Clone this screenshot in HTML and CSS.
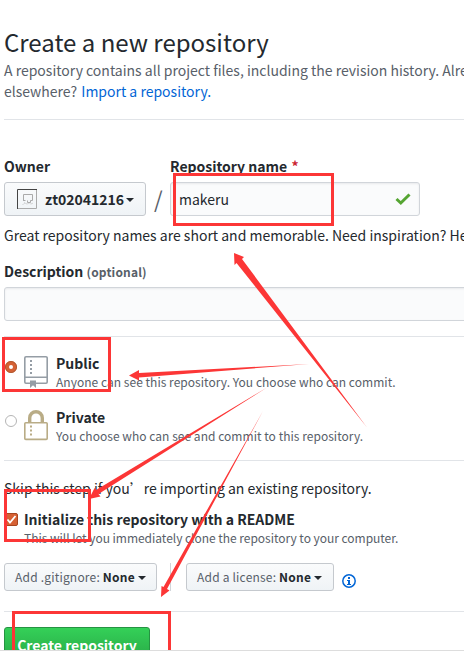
FILE: index.html
```html
<!DOCTYPE html>
<html lang="en">
<head>
<meta charset="utf-8">
<title>Create a new repository</title>
<link rel="stylesheet" href="styles.css">
</head>
<body>
<main class="page">
  <header class="intro">
    <h1>Create a new repository</h1>
    <p class="muted">A repository contains all project files, including the revision history. Already</p>
    <p class="muted">elsewhere? <a href="#">Import a repository.</a></p>
  </header>
  <form>
    <section class="names">
      <div class="fields">
        <div class="owner">
          <label class="label">Owner</label>
          <button type="button" class="btn owner-btn">
            <svg class="avatar" width="20" height="20" viewBox="0 0 20 20"><path d="M.5 19.500h19V.5" fill="none" stroke="#aaa"/><path d="M.5 20V.5h19.500" fill="none" stroke="#444"/><path d="M6.500 12V5.500h9V11.500h-2v2h-3v-2M6.500 11.500h2" fill="none" stroke="#aaa"/><path d="M6 15.500l2-2 2 2 2-2 2 2 2-2" fill="none" stroke="#aaa" stroke-dasharray="1 1"/></svg>
            <b>zt02041216</b><i class="caret"></i>
          </button>
        </div>
        <span class="slash">/</span>
        <div class="repo">
          <label class="label">Repository name <span class="star">*</span></label>
          <div class="input repo-input"><span>makeru</span>
            <svg width="16" height="14" viewBox="0 0 16 14"><path d="M1.500 7L5.800 11 14.500 2.500" fill="none" stroke="#55a532" stroke-width="3"/></svg>
          </div>
        </div>
      </div>
      <p class="hint">Great repository names are short and memorable. Need inspiration? Here</p>
    </section>
    <section class="description">
      <label class="label">Description <small>(optional)</small></label>
      <div class="input desc-input"></div>
    </section>
    <section class="visibility">
      <div class="choice">
        <i class="radio on"></i>
        <svg class="kind" width="24" height="32" viewBox="0 0 24 32"><path d="M6 27.200H2a1.200 1.200 0 0 1-1.200-1.200V2A1.200 1.200 0 0 1 2 .8h20A1.200 1.200 0 0 1 23.200 2v24a1.200 1.200 0 0 1-1.200 1.200H12M1 21.200h22" fill="none" stroke="#959da5" stroke-width="1.600"/><path d="M6 24.500h6V32l-3-2.700L6 32z" fill="#959da5"/><path d="M6 4h2v2H6zm0 4h2v2H6zm0 4h2v2H6zm0 4h2v2H6z" fill="#959da5"/></svg>
        <div><b>Public</b><p class="note">Anyone can see this repository. You choose who can commit.</p></div>
      </div>
      <div class="choice">
        <i class="radio"></i>
        <svg class="kind" width="24" height="32" viewBox="0 0 24 32"><path d="M5.700 13V8a6.300 6.300 0 0 1 12.600 0v5" fill="none" stroke="#b9ac86" stroke-width="3.400"/><rect x=".8" y="12.800" width="22.400" height="16.600" rx="1" fill="none" stroke="#b9ac86" stroke-width="1.600"/><path d="M6 15.500h2v2H6zm0 4h2v2H6zm0 4h2v2H6z" fill="#b9ac86"/></svg>
        <div><b>Private</b><p class="note">You choose who can see and commit to this repository.</p></div>
      </div>
    </section>
    <section class="setup">
      <p class="skip">Skip this step if you<span class="quote">’</span>re importing an existing repository.</p>
      <div class="init">
        <svg class="check" width="13" height="13" viewBox="0 0 13 13"><rect x=".5" y=".5" width="12" height="12" rx="1.500" fill="#d66134" stroke="#a74620"/><path d="M2.500 6.500L5 9.500l5.500-6.500" fill="none" stroke="#fff" stroke-width="1.800"/></svg>
        <div><b>Initialize this repository with a README</b><p class="note clone">This will let you immediately clone the repository to your computer.</p></div>
      </div>
      <div class="options">
        <button type="button" class="btn small gitignore"><span>Add .gitignore: <b>None</b></span><i class="caret"></i></button>
        <i class="divider"></i>
        <button type="button" class="btn small license"><span>Add a license: <b>None</b></span><i class="caret"></i></button>
        <svg class="info" width="14" height="14" viewBox="0 0 14 14"><circle cx="7" cy="7" r="6.200" fill="none" stroke="#0366d6" stroke-width="1.500"/><path d="M6 3h2v2H6zM5 6h3v4h1v1H5v-1h1V7H5z" fill="#0366d6"/></svg>
      </div>
    </section>
    <button type="button" class="create">Create repository</button>
  </form>
</main>
<svg class="marks" width="464" height="651" viewBox="0 0 464 651">
  <g fill="none" stroke="#fc3636" stroke-width="3">
    <path d="M174.500 174.500h158v50h-158zM3.500 338.500h106v52H3.500zM5.500 490.500h84v50h-84z"/>
    <path d="M13.500 652V612.500h156V652"/>
  </g>
  <g fill="#fc3636">
    <path d="M234 253l10 4-2 2 125 168.500-130.500-164.500-2 2z"/>
    <path d="M129 375.500l10-5.500v3l170-9-170 13.500v3z"/>
    <path d="M89 499l5.500-11 1.500 2 171-102.500L98.500 494l2 2.500z"/>
    <path d="M161 597l.5-11 2 1L263 411 167 589l2.500 1.500z"/>
  </g>
  <path d="M0 650.500h464" stroke="#ddd"/>
</svg>
</body>
</html>
```
FILE: styles.css
```css
* { box-sizing: border-box; }
html, body { height: 651px; overflow: hidden; }
body {
  margin: 0; background: #fff; color: #24292e; position: relative;
  font: 14px/21px "Noto Sans CJK SC", sans-serif;
}
h1, p { margin: 0; font-weight: 400; white-space: nowrap; }
span, b, label { white-space: nowrap; }
.page { width: 740px; padding: 24px 0 0 4px; }
.intro { height: 96px; border-bottom: 1px solid #e1e4e8; }
h1 { font-size: 24px; line-height: 36px; }
.muted { color: #586069; }
a { color: #0366d6; text-decoration: none; margin-left: 1px; }
.names { padding-top: 36px; }
.fields { display: flex; height: 60px; }
.label { display: block; font-weight: 700; line-height: 21px; margin-bottom: 5px; height: 21px; }
.star { color: #cb2431; margin-left: 1px; }
.btn {
  display: flex; align-items: center; font: inherit; color: #24292e; padding: 0;
  border: 1px solid #c5c9ce; border-radius: 3px;
  background: linear-gradient(#fafbfc, #eff3f6);
}
.owner-btn { width: 142px; height: 34px; padding-left: 12px; }
.avatar { margin-right: 8px; }
.caret { border: 4px solid transparent; border-top-color: #24292e; border-bottom: 0; margin: 2px 0 0 2px; }
.slash { width: 24px; padding: 25px 0 0 8px; font-size: 22px; line-height: 34px; color: #586069; }
.input { height: 34px; border: 1px solid #d1d5da; border-radius: 3px; background: #fafbfc; box-shadow: inset 0 1px 2px rgba(27,31,35,.075); }
.repo-input { width: 250px; display: flex; align-items: center; justify-content: space-between; padding: 0 8px; }
.hint { padding-top: 9px; }
.description { padding-top: 15px; }
small { font-size: 12px; color: #586069; letter-spacing: .15px; }
.visibility { margin-top: 15px; padding-top: 16px; height: 124px; border-top: 1px solid #e1e4e8; }
.choice { display: flex; height: 54px; }
.radio { width: 12px; height: 12px; margin: 8px 7px 0 1px; border: 1px solid #b5b5b5; border-radius: 50%; }
.radio.on { border: 4px solid #d66134; outline: 1px solid #b05a32; outline-offset: -1px; }
.kind { margin: 3px 8px 0 0; }
b { display: inline-block; }
.note { color: #586069; font-size: 12px; line-height: 16px; letter-spacing: .03px; }
.clone { letter-spacing: -.03px; }
.setup { height: 152px; border-top: 1px solid #e1e4e8; border-bottom: 1px solid #e1e4e8; }
.skip { padding-top: 17px; }
.quote { display: inline-block; width: 14px; }
.init { display: flex; padding-top: 10px; }
.check { margin: 4px 6px 0 1px; }
.options { display: flex; padding-top: 17px; align-items: flex-start; }
.small { height: 28px; font-size: 12px; letter-spacing: .2px; padding: 0 0 1px 10px; color: #586069; }
.small b { color: #24292e; }
.small .caret { margin: 2px 0 0 3px; }
.gitignore { width: 153px; }
.divider { width: 1px; height: 28px; background: #d1d5da; margin: 0 15px 0 13px; }
.license { width: 148px; }
.info { margin: 11px 0 0 8px; }
.create { display: block; width: 146px; height: 36px; margin-top: 15px; padding: 0; border: 1px solid #259342; border-radius: 3px; background: linear-gradient(#34d058, #28a745); color: #fff; font: 700 14px/34px "Noto Sans CJK SC", sans-serif; }
.marks { position: absolute; left: 0; top: 0; }
```
